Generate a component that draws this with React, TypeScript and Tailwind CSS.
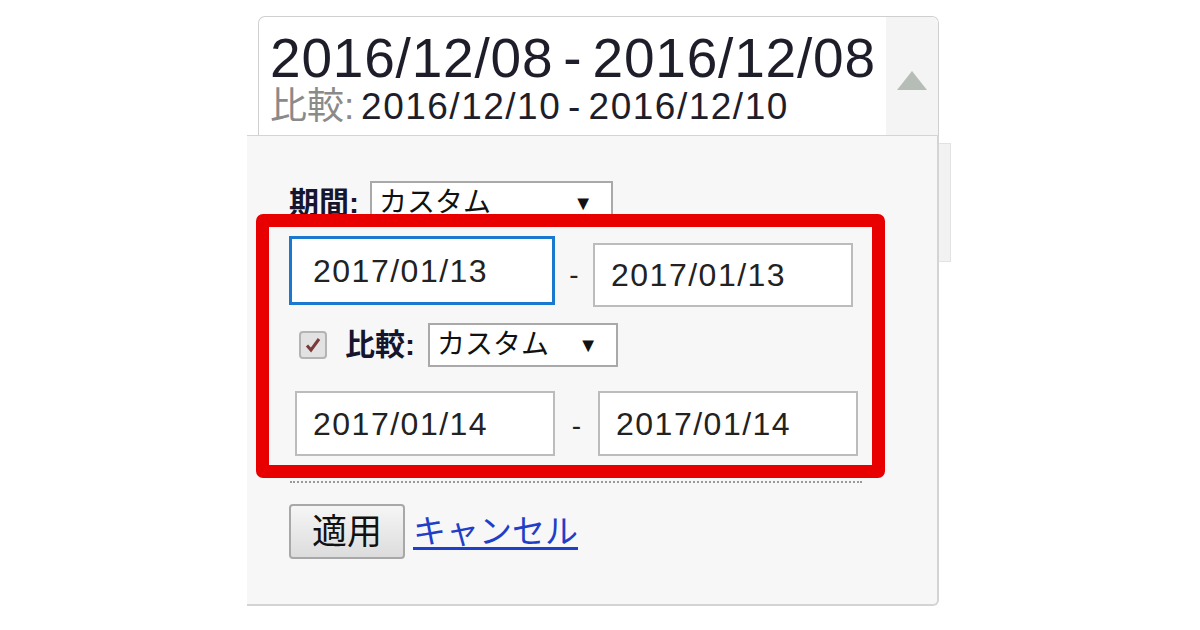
import React from "react";

const jp = { fontFamily: '"Liberation Sans", "Noto Sans CJK JP", sans-serif' };

const DateBox = ({ value, focused = false, className = "" }: { value: string; focused?: boolean; className?: string }) => (
  <div
    className={`flex items-center bg-white text-[32px] tracking-[1.5px] text-[#222] ${
      focused ? "border-[3px] border-[#1a78cf] pl-[21px]" : "border-2 border-[#bcbcbc] pl-[16px]"
    } ${className}`}
  >
    {value}
  </div>
);

const Select = ({ className = "" }: { className?: string }) => (
  <div className={`flex items-center justify-between border-2 border-[#a9a9a9] bg-white pl-[7px] pr-[18px] ${className}`}>
    <span className="text-[28px] leading-none text-[#111]">カスタム</span>
    <span className="text-[20px] leading-none text-[#111]">▼</span>
  </div>
);

/**
 * Date range picker, opened, with the custom range highlighted.
 */
const App = () => {
  return (
    <div className="h-[630px] w-[1200px] bg-white pt-[16px] pl-[247px]" style={jp}>
      {/* summary box */}
      <div className="ml-[11px] flex h-[119px] w-[681px] overflow-hidden rounded-t-[7px] border border-b-0 border-[#cfcfcf] bg-white">
        <div className="flex-1 pl-[11px] pt-[14px]">
          <div className="whitespace-nowrap text-[55px] leading-[55px] tracking-[0.8px] text-[#1e1e2a] [word-spacing:-6px]">
            2016/12/08 - 2016/12/08
          </div>
          <div className="mt-[2px] whitespace-nowrap text-[37px] leading-[37px] tracking-[1.5px] text-[#1e1e2a] [word-spacing:-5px]">
            <span className="tracking-normal text-[#8a8a8a]">比較:</span> 2016/12/10 - 2016/12/10
          </div>
        </div>
        <div className="flex w-[52px] justify-center bg-[#f4f4f4] pt-[54px]">
          <svg width="30" height="19" viewBox="0 0 30 19">
            <polygon points="15,0 30,19 0,19" fill="#b6bdb6" />
          </svg>
        </div>
      </div>

      <div className="flex items-start">
        {/* dropdown panel */}
        <div className="relative h-[471px] w-[692px] rounded-br-[6px] border-t border-r-2 border-b-2 border-[#d4d4d4] bg-[#f7f7f7] pl-[42px] pt-[45px]">
          <div className="flex h-[44px] items-center">
            <span className="w-[81px] text-[30px] font-bold leading-none text-[#151530]">期間:</span>
            <Select className="h-[44px] w-[243px]" />
          </div>

          <div className="mt-[11px] flex items-start">
            <DateBox value="2017/01/13" focused className="h-[69px] w-[266px]" />
            <div className="flex w-[38px] justify-center pt-[18px] text-[28px] text-[#222]">-</div>
            <DateBox value="2017/01/13" className="mt-[7px] h-[64px] w-[260px]" />
          </div>

          <div className="mt-[16px] flex h-[44px] items-center">
            <div className="ml-[10px] flex h-[28px] w-[28px] items-center justify-center rounded-[4px] border-2 border-[#b4b4b4] bg-[#e2e2e2]">
              <svg width="18" height="18" viewBox="0 0 18 18">
                <path d="M3 9.5 L7 14 L15 3" fill="none" stroke="#7a3a3a" strokeWidth="3" />
              </svg>
            </div>
            <span className="ml-[18px] w-[83px] text-[30px] font-bold leading-none text-[#151530]">比較:</span>
            <Select className="h-[44px] w-[190px]" />
          </div>

          <div className="mt-[24px] ml-[6px] flex items-start">
            <DateBox value="2017/01/14" className="h-[65px] w-[260px]" />
            <div className="flex w-[43px] justify-center pt-[14px] text-[28px] text-[#222]">-</div>
            <DateBox value="2017/01/14" className="h-[65px] w-[260px]" />
          </div>

          <div className="mt-[25px] ml-[1px] w-[572px] border-t-2 border-dotted border-[#9a9a9a]" />

          <div className="mt-[21px] flex items-center">
            <button className="flex h-[55px] w-[116px] items-center justify-center rounded-[4px] border-2 border-[#a8a8a8] bg-gradient-to-b from-[#f6f6f6] to-[#dcdcdc] text-[35px] leading-none text-[#111]">
              適用
            </button>
            <a className="ml-[8px] text-[33px] leading-none text-[#1f3fc8] underline underline-offset-4">キャンセル</a>
          </div>

          {/* highlight */}
          <div className="absolute left-[9px] top-[78px] h-[264px] w-[629px] rounded-[7px] border-[13px] border-[#e80000]" />
        </div>

        <div className="mt-[8px] h-[119px] w-[12px] border-y border-r border-[#e2e2e2] bg-[#f2f2f2]" />
      </div>
    </div>
  );
};

export default App;
